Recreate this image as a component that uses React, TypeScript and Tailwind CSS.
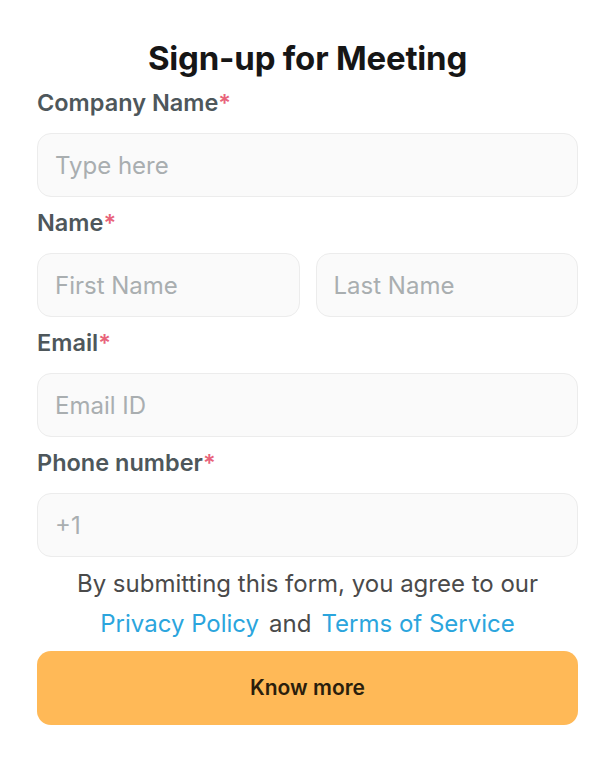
const Label = ({ text }: { text: string }) => (
  <label className="block text-[23.5px] leading-[30px] font-semibold text-[#4e575b]">
    {text}
    <span className="text-[#e8637a]">*</span>
  </label>
);

const Field = ({ placeholder }: { placeholder: string }) => (
  <input
    type="text"
    placeholder={placeholder}
    className="h-[64px] w-full min-w-0 rounded-[14px] border border-[#ececec] bg-[#fafafa] px-[17px] text-[24px] text-[#333] outline-none placeholder:text-[#a9aeb0]"
  />
);

export default function App() {
  return (
    <div
      className="min-h-[762px] bg-white px-[37px] pt-[38px]"
      style={{ fontFamily: "Inter, 'Noto Sans', sans-serif" }}
    >
      <h1 className="text-center text-[33px] leading-[40px] font-bold tracking-[-0.2px] text-[#161616]">
        Sign-up for Meeting
      </h1>

      <form className="mt-[10px] flex flex-col">
        <Label text="Company Name" />
        <div className="mt-[15px]">
          <Field placeholder="Type here" />
        </div>

        <div className="mt-[11px]">
          <Label text="Name" />
        </div>
        <div className="mt-[15px] flex gap-[16px]">
          <Field placeholder="First Name" />
          <Field placeholder="Last Name" />
        </div>

        <div className="mt-[11px]">
          <Label text="Email" />
        </div>
        <div className="mt-[15px]">
          <Field placeholder="Email ID" />
        </div>

        <div className="mt-[11px]">
          <Label text="Phone number" />
        </div>
        <div className="mt-[15px]">
          <Field placeholder="+1" />
        </div>

        <p className="mt-[7px] text-center text-[24px] leading-[40px] text-[#4a4a4a]">
          By submitting this form, you agree to our
          <br />
          <a href="#" className="text-[#2ba5dd]">Privacy Policy</a>
          <span className="mx-[10px]">and</span>
          <a href="#" className="text-[#2ba5dd]">Terms of Service</a>
        </p>

        <button
          type="button"
          className="mt-[7px] h-[74px] w-full rounded-[14px] bg-[#ffb957] text-[21px] font-semibold text-[#2b1e0c]"
        >
          Know more
        </button>
      </form>
    </div>
  );
}
